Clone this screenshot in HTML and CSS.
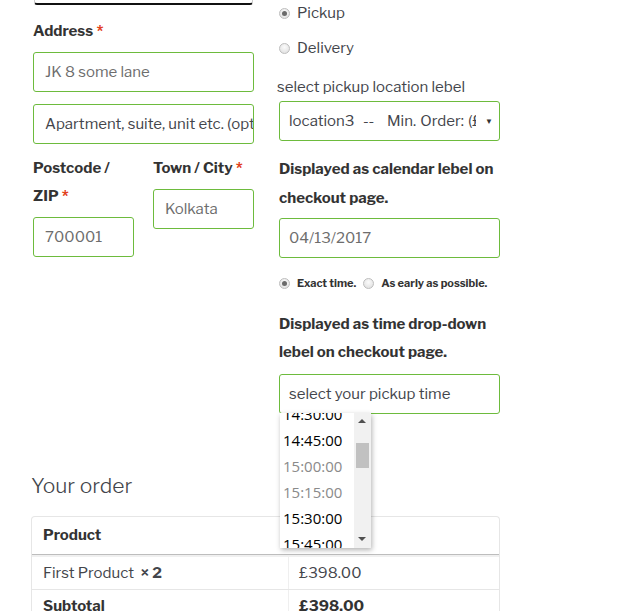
FILE: index.html
```html
<!DOCTYPE html>
<html>
<head>
<meta charset="utf-8">
<link rel="stylesheet" href="styles.css">
</head>
<body>
<div class="page">
  <div class="cols">
    <div class="left">
      <div class="cut-input"></div>
      <label class="lbl lbl-address">Address <span class="req">*</span></label>
      <div class="input">JK 8 some lane</div>
      <div class="input input-2">Apartment, suite, unit etc. (optional)</div>
      <div class="pair">
        <div class="pc">
          <label class="lbl">Postcode / ZIP <span class="req">*</span></label>
          <div class="input">700001</div>
        </div>
        <div class="town">
          <label class="lbl">Town / City <span class="req">*</span></label>
          <div class="input">Kolkata</div>
        </div>
      </div>
    </div>
    <div class="right">
      <div class="radio-line"><span class="radio checked"></span>Pickup</div>
      <div class="radio-line r2"><span class="radio"></span>Delivery</div>
      <div class="plain">select pickup location lebel</div>
      <div class="input select"><span class="sel-text">location3 &nbsp;-- &nbsp; Min. Order: (£200.00)</span><span class="caret">&#9660;</span></div>
      <label class="lbl lbl-cal">Displayed as calendar lebel on checkout page.</label>
      <div class="input">04/13/2017</div>
      <div class="small-radios">
        <span class="radio checked"></span><span class="sr-text">Exact time.</span>
        <span class="radio"></span><span class="sr-text">As early as possible.</span>
      </div>
      <label class="lbl lbl-time">Displayed as time drop-down lebel on checkout page.</label>
      <div class="select-wrap">
        <div class="input time-select">select your pickup time</div>
        <div class="dropdown">
          <div class="options">
            <div class="opt o-first">14:30:00</div>
            <div class="opt">14:45:00</div>
            <div class="opt dis">15:00:00</div>
            <div class="opt dis">15:15:00</div>
            <div class="opt">15:30:00</div>
            <div class="opt">15:45:00</div>
          </div>
          <div class="sbar">
            <span class="arr up"></span>
            <span class="thumb"></span>
            <span class="arr down"></span>
          </div>
        </div>
      </div>
    </div>
  </div>
  <h3 class="order-title">Your order</h3>
  <div class="table">
    <div class="row head"><div class="c1">Product</div><div class="c2"></div></div>
    <div class="row item"><div class="c1">First Product &nbsp;<strong>× 2</strong></div><div class="c2">£398.00</div></div>
    <div class="row sub"><div class="c1">Subtotal</div><div class="c2">£398.00</div></div>
  </div>
</div>
</body>
</html>
```
FILE: styles.css
```css
html, body { margin: 0; padding: 0; background: #fff; }
body {
  font-family: "Libre Franklin", Lato, "Liberation Sans", sans-serif;
  color: #43454b;
  font-size: 15px;
  overflow: hidden;
  height: 611px;
}
.page { padding-left: 31px; width: 470px; }
.cols { display: flex; gap: 23px; }
.left { width: 221px; margin-left: 2px; }
.right { width: 223px; }

.cut-input {
  height: 3px;
  margin-left: 1px;
  width: 217px;
  border: 1px solid #ccc;
  border-top: none;
  border-bottom: 2px solid #111;
  border-radius: 0 0 3px 3px;
}
.lbl {
  display: block;
  font-weight: 700;
  color: #333;
  line-height: 28px;
  font-size: 15px;
}
.req { color: #e2401c; }
.lbl-address { margin-top: 12px; margin-bottom: 7px; }

.input {
  box-sizing: border-box;
  height: 40px;
  border: 1px solid #6dbb3d;
  border-radius: 3px;
  padding: 0 11px;
  line-height: 38px;
  color: #6d6d6d;
  white-space: nowrap;
  overflow: hidden;
  font-size: 15px;
}
.input-2 { margin-top: 12px; color: #43454b; }
.pair { display: flex; gap: 19px; margin-top: 10px; }
.pc { width: 101px; }
.town { width: 101px; }
.pair .lbl { margin-bottom: 7px; }

.radio-line {
  display: flex; align-items: center;
  height: 26px;
  color: #43454b;
}
.r2 { margin-top: 9px; }
.radio {
  display: inline-block;
  box-sizing: border-box;
  width: 11px; height: 11px;
  border-radius: 50%;
  border: 1px solid #bdbdbd;
  background: radial-gradient(circle at 50% 35%, #fbfbfb, #dcdcdc);
  margin: 0 7px 0 2px;
  position: relative;
  flex: none;
}
.radio.checked::after {
  content: "";
  position: absolute;
  left: 2px; top: 2px;
  width: 5px; height: 5px;
  border-radius: 50%;
  background: #6a6a6a;
}
.plain { margin-top: 13px; line-height: 26px; color: #43454b; font-size: 15px; }
.right .input { margin-left: 2px; padding-left: 9px; }
.select { margin-top: 1px; display: flex; align-items: center; padding-right: 6px; color: #43454b; }
.sel-text { flex: 1; overflow: hidden; white-space: nowrap; margin-right: 9px; word-spacing: 1px; }
.caret { font-size: 8px; color: #333; }
.lbl-cal { margin-top: 14px; margin-bottom: 5px; padding-left: 2px; line-height: 29px; }
.small-radios {
  display: flex; align-items: center;
  margin-top: 17px;
  height: 16px;
  font-size: 11px; font-weight: 700; color: #333;
}
.sr-text { margin-right: 5px; }
.lbl-time { margin-top: 19px; margin-bottom: 8px; padding-left: 2px; }
.select-wrap { position: relative; }
.time-select { color: #43454b; }

.dropdown {
  position: absolute;
  left: 3px; top: 39px;
  width: 91px; height: 135px;
  background: #fff;
  box-shadow: 1px 2px 5px rgba(0,0,0,0.3);
  display: flex;
  overflow: hidden;
}
.options { flex: 1; overflow: hidden; font-family: "Open Sans", "Noto Sans", sans-serif; font-size: 15px; color: #000; }
.opt { height: 26px; line-height: 26px; padding-left: 3px; }
.o-first { margin-top: -12px; }
.opt.dis { color: #8a8a8a; }
.sbar { width: 17px; background: #f1f1f1; position: relative; }
.arr { position: absolute; left: 4px; width: 0; height: 0; border-left: 4px solid transparent; border-right: 4px solid transparent; }
.arr.up { top: 6px; border-bottom: 4px solid #505050; }
.arr.down { bottom: 7px; border-top: 4px solid #505050; }
.thumb { position: absolute; left: 2px; top: 30px; width: 13px; height: 25px; background: #c1c1c1; }

.order-title {
  margin: 58px 0 0 0;
  font-weight: 300;
  font-size: 21px;
  line-height: 28px;
  color: #43454b;
}
.table {
  margin-top: 16px;
  width: 467px;
  border: 1px solid #e6e6e6;
  border-bottom: none;
  border-radius: 4px 4px 0 0;
}
.row { display: flex; }
.c1 { width: 245px; padding-left: 11px; border-right: 1px solid #efefef; }
.c2 { flex: 1; padding-left: 10px; }
.head { height: 36px; padding-bottom: 1px; align-items: center; font-weight: 700; color: #333; border-bottom: 1px solid #bdbdbd; }
.head .c1 { border-right: none; }
.item { border-top: 2px solid #f0f0f0; height: 32px; align-items: center; border-bottom: 1px solid #e6e6e6; }
.item .c1, .item .c2 { line-height: 32px; }
.sub { height: 32px; align-items: center; font-weight: 700; color: #333; }
.sub .c1, .sub .c2 { line-height: 32px; }
```
